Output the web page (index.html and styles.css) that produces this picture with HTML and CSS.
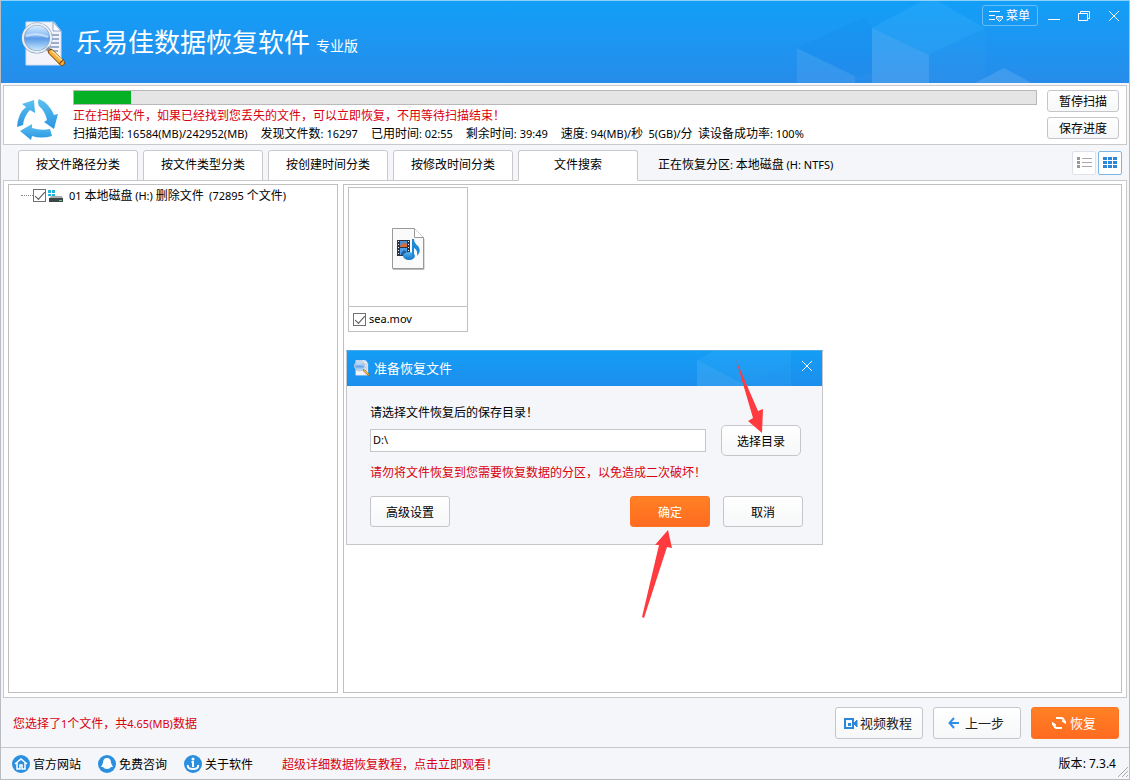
FILE: index.html
```html
<!DOCTYPE html>
<html lang="zh-CN">
<head>
<meta charset="utf-8">
<title>乐易佳数据恢复软件</title>
<link rel="stylesheet" href="styles.css">
</head>
<body>
<svg class="defs" width="0" height="0" aria-hidden="true">
  <defs>
    <linearGradient id="lens" x1="0" y1="0" x2="0" y2="1"><stop offset="0" stop-color="#e4f3ff"/><stop offset=".4" stop-color="#8ebff5"/><stop offset=".52" stop-color="#5b9be8"/><stop offset="1" stop-color="#d5f2ff"/></linearGradient>
    <linearGradient id="arrow" x1="0" y1="0" x2="0" y2="1"><stop offset="0" stop-color="#5cc0f0"/><stop offset="1" stop-color="#2a96e2"/></linearGradient>
    <linearGradient id="note" x1="0" y1="0" x2="0" y2="1"><stop offset="0" stop-color="#54b8f2"/><stop offset="1" stop-color="#1370c4"/></linearGradient>
    <symbol id="logo" viewBox="0 0 46 46">
      <path d="M5 1h28l7 9v34H5z" fill="#f3f4fb" stroke="#d3dcf0"/>
      <path d="M32 1v9h8z" fill="#fff" stroke="#8da9cf"/>
      <path d="M29 14h9M30 18h8M30 22h8M29 26h9M28 30h9" stroke="#7d95bd" stroke-width="1.3"/>
      <circle cx="16" cy="17" r="14" fill="url(#lens)" stroke="#8a9cb5" stroke-width="3"/>
      <circle cx="16" cy="17" r="14" fill="none" stroke="#e8eef6" stroke-width="2"/>
      <path d="M5 15q11-4 22 1" fill="none" stroke="#fff" stroke-opacity=".5" stroke-width="2"/>
      <path d="M26 27l4 4" stroke="#8391a5" stroke-width="4"/>
      <path d="M30 31l11 11" stroke="#8c4d0a" stroke-width="6" stroke-linecap="round"/>
      <path d="M30 31l11 11" stroke="#f5b03a" stroke-width="4" stroke-linecap="round"/>
      <path d="M31 30l11 10" stroke="#ffe39b" stroke-width="1.5" stroke-linecap="round"/>
      <path d="M38 43l5-5" stroke="#8c4d0a" stroke-width="1.2"/>
    </symbol>
  </defs>
</svg>

<div class="window">
  <header class="header">
    <svg class="cubes" width="250" height="82" viewBox="0 0 250 82" aria-hidden="true">
      <path d="M17 47L85 16l7 11v44l-17 5z" fill="#0f7fe8" fill-opacity=".14"/>
      <path d="M17 47l58 28v7H17z" fill="#fff" fill-opacity=".08"/>
      <path d="M92 27l50-27h16l47 27-56 27z" fill="#4cc0ff" fill-opacity=".2"/>
      <path d="M92 27l57 27v28H92z" fill="#fff" fill-opacity=".12"/>
      <path d="M149 54l56-27v55h-56z" fill="#fff" fill-opacity=".02"/>
      <path d="M195 82l29-15 28 15z" fill="#fff" fill-opacity=".12"/>
    </svg>
    <svg class="logo" width="46" height="46" aria-hidden="true"><use href="#logo"/></svg>
    <h1 class="title">乐易佳数据恢复软件</h1>
    <span class="edition">专业版</span>
    <div class="window-tools">
      <button class="menu-button" type="button">
        <svg width="16" height="14" viewBox="0 0 16 14" fill="none" stroke="#fff"><path d="M1 2.500h11M1 6.500h6M1 10.500h6"/><path d="M8.500 7.500h6v2l-3 3-3-3z" fill="#4fb4fa"/></svg>
        菜单
      </button>
      <button class="window-button" type="button" aria-label="最小化"><svg width="14" height="14" viewBox="0 0 14 14" stroke="#fff"><path d="M1 10.500h12"/></svg></button>
      <button class="window-button" type="button" aria-label="还原"><svg width="14" height="14" viewBox="0 0 14 14" fill="none" stroke="#fff"><path d="M1.500 4.500h9v7h-9zM3.500 4V2.500h9v7H11"/></svg></button>
      <button class="window-button" type="button" aria-label="关闭"><svg width="14" height="14" viewBox="0 0 14 14" stroke="#fff"><path d="M2 2l10 10M12 2L2 12"/></svg></button>
    </div>
  </header>

  <section class="scan">
    <svg class="scan-icon" width="46" height="44" viewBox="0 0 46 44" fill="url(#arrow)" aria-hidden="true">
      <path d="M18 2L6 6l4 3Q2 15 1 29l6-2Q8 18 14 12l5 3z"/>
      <path d="M23 1q-2 3 0 7 6 5 8 14l-3 2 10 7 4-15-4 1Q33 5 23 1z"/>
      <path d="M4 33l12-7v4q9 3 18 1l2 7q-11 3-20 0l-1 4z"/>
    </svg>
    <div class="scan-info">
      <progress class="scan-progress" value="57" max="964" aria-label="扫描进度"></progress>
      <p class="scan-line alert">正在扫描文件，如果已经找到您丢失的文件，可以立即恢复，不用等待扫描结束！</p>
      <p class="scan-line stats">
        <span>扫描范围<b>: 16584(MB)/242952(MB)</b></span>
        <span>发现文件数<b>: 16297</b></span>
        <span>已用时间<b>: 02:55</b></span>
        <span>剩余时间<b>: 39:49</b></span>
        <span>速度<b>: 94(MB)/</b>秒&nbsp; <b>5(GB)/</b>分&nbsp; 读设备成功率<b>: 100%</b></span>
      </p>
    </div>
    <div class="scan-buttons">
      <button class="button small" type="button">暂停扫描</button>
      <button class="button small" type="button">保存进度</button>
    </div>
  </section>

  <nav class="tabs">
    <button class="tab" type="button">按文件路径分类</button>
    <button class="tab" type="button">按文件类型分类</button>
    <button class="tab" type="button">按创建时间分类</button>
    <button class="tab" type="button">按修改时间分类</button>
    <button class="tab active" type="button">文件搜索</button>
    <span class="partition">正在恢复分区<b>: </b>本地磁盘 <b>(H: NTFS)</b></span>
    <div class="views">
      <button class="view" type="button" aria-label="列表"><svg width="16" height="14" viewBox="0 0 16 14"><path d="M1 1h3v3H1zM1 5h3v3H1zM1 9h3v3H1z" fill="#999"/><path d="M6 2.500h10M6 6.500h10M6 10.500h10" stroke="#a8a8a8"/></svg></button>
      <button class="view on" type="button" aria-label="缩略图"><svg width="16" height="14" viewBox="0 0 16 14" fill="#2e86d8"><path d="M1 1h4v3H1zM6 1h4v3H6zM11 1h4v3h-4zM1 5h4v3H1zM6 5h4v3H6zM11 5h4v3h-4zM1 9h4v3H1zM6 9h4v3H6zM11 9h4v3h-4z"/></svg></button>
    </div>
  </nav>

  <main class="workspace">
    <div class="tree">
      <label class="tree-item">
        <span class="branch"></span>
        <input class="check" type="checkbox" checked>
        <svg class="drive" width="16" height="14" viewBox="0 0 16 14" aria-hidden="true"><path d="M0 1h3v3H0zM4 1h3v3H4zM0 5h3v2H0zM4 5h3v2H4z" fill="#22b4dd"/><path d="M3 7h11l1 3H1z" fill="#a9b0b2"/><path d="M1 9h14v4H1z" fill="#3c464a"/><path d="M11 11h3v1h-3z" fill="#3fdf6a"/></svg>
        <span><b>01 </b>本地磁盘 <b>(H:) </b>删除文件&nbsp; <b>(72895 </b>个文件<b>)</b></span>
      </label>
    </div>
    <div class="files">
      <label class="file">
        <span class="thumb">
          <svg width="34" height="44" viewBox="0 0 34 44" aria-hidden="true">
            <path d="M2 42.500h31V12" fill="none" stroke="#bbb"/>
            <path d="M1.500 1.500h22l9 9v31h-31z" fill="#fafafa" stroke="#999"/>
            <path d="M23.500 1.500v9h9" fill="#fff" stroke="#999"/>
            <path d="M6 13h13v16H6z" fill="#2b3440"/>
            <path d="M9 14h7v6H9z" fill="#4f8fd0"/><path d="M9 21h7v7H9z" fill="#4fa0ea"/>
            <path d="M9 19l3-3 4 1v3H9z" fill="#d8693c"/><path d="M10 26l3-3 3 2v3h-6z" fill="#285b9c"/>
            <path d="M7.500 14v14M17.500 14v14" stroke="#eee" stroke-dasharray="1 2"/>
            <ellipse cx="18" cy="29" rx="6" ry="4" fill="url(#note)"/>
            <path d="M21 12h2q0 4 4 7 4 5-1 10 1-6-3-8v9h-2z" fill="#2188d8"/>
          </svg>
        </span>
        <span class="file-name"><input class="check" type="checkbox" checked><b>sea.mov</b></span>
      </label>

      <section class="dialog" role="dialog" aria-labelledby="dialog-title">
        <div class="dialog-head">
          <svg class="dialog-cubes" width="130" height="35" viewBox="0 0 130 35" aria-hidden="true"><path d="M5 9L22 0h77v35H5z" fill="#4cc0ff" fill-opacity=".16"/><path d="M5 9l50 26H5z" fill="#fff" fill-opacity=".06"/><path d="M52 35l47-22v22z" fill="#1a85e8" fill-opacity=".1"/></svg>
          <svg width="16" height="16" aria-hidden="true"><use href="#logo"/></svg>
          <h2 class="dialog-title" id="dialog-title">准备恢复文件</h2>
          <button class="window-button" type="button" aria-label="关闭"><svg width="14" height="14" viewBox="0 0 14 14" stroke="#fff"><path d="M2 2l10 10M12 2L2 12"/></svg></button>
        </div>
        <div class="dialog-body">
          <label class="dialog-text" for="folder">请选择文件恢复后的保存目录！</label>
          <div class="folder-row">
            <input class="folder" id="folder" type="text" value="D:\">
            <button class="button large" type="button">选择目录</button>
          </div>
          <p class="dialog-text alert">请勿将文件恢复到您需要恢复数据的分区，以免造成二次破坏！</p>
          <div class="dialog-actions">
            <button class="button large" type="button">高级设置</button>
            <button class="button large primary" type="button">确定</button>
            <button class="button large" type="button">取消</button>
          </div>
        </div>
        <svg class="pointers" width="476" height="270" viewBox="0 0 476 270" fill="#ff3b3f" aria-hidden="true">
          <path d="M389 9L411 60l5-2-1 24-14-12 5-3z"/>
          <path d="M321 179l4 18-5-1L297 267l-2-1L312 194l-4 0z"/>
        </svg>
      </section>
    </div>
  </main>

  <section class="actions">
    <p class="selection alert">您选择了<b>1</b>个文件，共<b>4.65(MB)</b>数据</p>
    <button class="button action" type="button"><svg width="14" height="14" viewBox="0 0 14 14" fill="none" stroke="#2e86d8" stroke-width="2"><path d="M1 3h8v9H1z"/><path d="M4 7h3v3H4z" fill="#2e86d8" stroke="none"/><path d="M10 7l3-3v7l-3-3" fill="#2e86d8" stroke-width="1"/></svg>视频教程</button>
    <button class="button action back" type="button"><svg width="12" height="12" viewBox="0 0 12 12" fill="none" stroke="#2e8fe8" stroke-width="2"><path d="M11 6H2M6 1L1.500 6 6 11"/></svg>上一步</button>
    <button class="button action primary" type="button"><svg width="14" height="14" viewBox="0 0 14 14" fill="none" stroke="#fff" stroke-width="2"><path d="M4 2h5q3 0 3 4M10 12H5q-3 0-3-4"/><path d="M10 5h3.500v2.500zM.5 9V6.500L4 9z" fill="#fff" stroke-width="1"/></svg>恢复</button>
  </section>

  <footer class="footer">
    <a class="link" href="#"><svg width="18" height="18" viewBox="0 0 18 18"><circle cx="9" cy="9" r="9" fill="#2b8fe0"/><path d="M3 9l6-5 6 5M5 8v6h3v-4h2v4h3V8" fill="none" stroke="#fff" stroke-width="1.500"/></svg>官方网站</a>
    <a class="link" href="#"><svg width="18" height="18" viewBox="0 0 18 18"><circle cx="9" cy="9" r="9" fill="#2b8fe0"/><path d="M9 3q4 0 4 5l2 4h-2q-1 2-4 2t-4-2H3l2-4q0-5 4-5z" fill="#fff"/></svg>免费咨询</a>
    <a class="link" href="#"><svg width="18" height="18" viewBox="0 0 18 18"><circle cx="9" cy="9" r="9" fill="#2b8fe0"/><path d="M7.500 7H9v5M4 10q-1 4 5 4t5-4" fill="none" stroke="#fff" stroke-width="2"/><circle cx="9" cy="4" r="1.500" fill="#fff"/></svg>关于软件</a>
    <a class="guide alert" href="#">超级详细数据恢复教程，点击立即观看！</a>
    <span class="version">版本<b>: 7.3.4</b></span>
    <svg class="grip" width="12" height="12" viewBox="0 0 12 12" stroke="#aaa" aria-hidden="true"><path d="M1 11L11 1M5 11l6-6M9 11l2-2"/></svg>
  </footer>
</div>
</body>
</html>
```

FILE: styles.css
```css
* { box-sizing: border-box; }
body, h1, h2, p { margin: 0; }
body {
  font: 12px/18px "Noto Sans CJK SC", sans-serif;
  color: #000;
  background: #f4f6f9;
}
button, input { font: inherit; color: inherit; }
button { padding: 0; white-space: nowrap; }
b { font: 11px/18px "Noto Sans", sans-serif; white-space: pre; }
svg { flex: none; display: block; }
.defs { position: absolute; }
.alert { color: #d9000f; }

.window {
  display: flex;
  flex-direction: column;
  min-height: 100vh;
  border: 1px solid #b9bdc2;
  border-top-color: #8ed0f8;
}

.header {
  position: relative;
  display: flex;
  align-items: center;
  height: 82px;
  padding-left: 20px;
  color: #fff;
  background: linear-gradient(#129ff8, #278cea);
}
.cubes { position: absolute; top: 0; right: 99px; }
.logo { margin-top: 3px; }
.title { margin: 0 0 3px 9px; font-size: 26px; line-height: 40px; font-weight: 400; }
.edition { margin: 6px 0 0 6px; font-size: 14px; line-height: 20px; }
.window-tools {
  position: relative;
  display: flex;
  align-self: flex-start;
  align-items: center;
  gap: 16px;
  margin: 4px 8px 0 auto;
}
.menu-button {
  display: flex;
  align-items: center;
  justify-content: center;
  gap: 2px;
  width: 56px;
  height: 21px;
  margin-right: -7px;
  padding: 0 2px 2px 0;
  color: #fff;
  background: none;
  border: 1px solid #67bdf9;
  border-radius: 3px;
}
.menu-button svg { margin-top: 2px; }
.window-button { width: 14px; height: 14px; border: 0; padding: 0; background: none; }

.scan {
  display: flex;
  min-height: 60px;
  margin: 2px 2px 0;
  padding: 4px 7px 0 12px;
  background: #fff;
  border: 1px solid #c9c9cb;
}
.scan-icon { margin-top: 8px; }
.scan-info { flex: 1; margin: 0 10px 0 11px; }
.scan-progress {
  display: block;
  width: 100%;
  height: 15px;
  appearance: none;
  border: 1px solid #b9b9b9;
  background: #e5e5e5;
}
.scan-progress::-webkit-progress-bar { background: #e5e5e5; }
.scan-progress::-webkit-progress-value { background: #06b025; }
.scan-line { line-height: 18px; white-space: nowrap; }
.scan-line.alert { margin-top: 1px; }
.stats { display: flex; gap: 13px; }
.scan-buttons { display: flex; flex-direction: column; gap: 5px; }

.button {
  border: 1px solid #c4c6c9;
  border-radius: 3px;
  background: linear-gradient(#fff, #f6f7f8);
}
.small { width: 72px; height: 22px; }
.large { width: 80px; height: 31px; }
.action {
  display: flex;
  align-items: center;
  justify-content: center;
  gap: 2px;
  width: 88px;
  height: 32px;
  padding-right: 2px;
  font-size: 13px;
  color: #222;
}
.back { gap: 5px; }
.primary {
  color: #fff;
  border-color: #ff7424;
  background: linear-gradient(#ff8124, #ff6b21);
}
.action.primary { gap: 4px; }

.tabs {
  display: flex;
  align-items: flex-end;
  gap: 5px;
  height: 36px;
  padding: 0 7px 0 17px;
}
.tab {
  width: 120px;
  height: 31px;
  padding-bottom: 3px;
  background: #fff;
  border: 1px solid #c9c9cb;
  border-radius: 3px 3px 0 0;
}
.tab.active { position: relative; z-index: 1; border-bottom-color: #fff; }
.partition { margin: 0 0 7px 15px; }
.views { display: flex; gap: 2px; margin: 0 0 6px auto; }
.view {
  display: grid;
  place-items: center;
  width: 24px;
  height: 24px;
  background: #fff;
  border: 1px solid #dde2e8;
  border-radius: 2px;
}
.view.on { border-color: #7bb5e4; }

.workspace {
  display: flex;
  flex: 1;
  gap: 5px;
  margin: -1px 2px 0;
  padding: 3px 4px 4px;
  background: #fff;
  border: 1px solid #c9c9cb;
}
.tree { width: 330px; flex: none; padding: 1px 12px; border: 1px solid #c0c0c0; }
.tree-item { display: flex; align-items: center; white-space: nowrap; }
.branch { width: 12px; border-top: 1px dotted #888; }
.check {
  flex: none;
  width: 13px;
  height: 13px;
  margin: 0;
  appearance: none;
  border: 1px solid #707070;
  background: #fff;
  display: grid;
  place-items: center;
}
.check:checked::after {
  content: "";
  width: 9px;
  height: 4px;
  border: solid #555;
  border-width: 0 0 1px 1px;
  transform: translateY(-1px) rotate(-48deg);
}
.drive { margin: 0 5px 0 2px; }
.files { position: relative; flex: 1; padding: 2px 4px; border: 1px solid #c0c0c0; }
.file { display: block; width: 120px; border: 1px solid #c0c0c0; }
.thumb {
  display: grid;
  place-items: center;
  height: 119px;
  padding-top: 4px;
  border-bottom: 1px solid #c0c0c0;
}
.file-name { display: flex; align-items: center; gap: 3px; height: 24px; padding-left: 4px; }

.dialog {
  position: absolute;
  top: 165px;
  left: 2px;
  width: 477px;
  background: #f5f6f9;
  border: 1px solid #c4c6c9;
  border-top-color: #4fa8e8;
}
.dialog-head {
  position: relative;
  display: flex;
  align-items: center;
  gap: 4px;
  height: 35px;
  padding: 0 8px 2px 7px;
  color: #fff;
  background: linear-gradient(#149df6, #1c8eec);
}
.dialog-head .window-button { position: relative; margin: -3px 0 0 auto; }
.dialog-cubes { position: absolute; top: 0; right: 0; }
.dialog-title { font-size: 13px; line-height: 20px; font-weight: 400; }
.dialog-body { padding: 17px 19px 17px 23px; }
.dialog-text { display: block; line-height: 18px; }
.folder-row { display: flex; align-items: center; gap: 15px; margin-top: 4px; padding-right: 2px; }
.folder-row .button { border-radius: 5px; }
.folder {
  flex: 1;
  min-width: 0;
  height: 23px;
  padding: 0 2px 2px;
  border: 1px solid #c4c6c9;
  background: #fff;
  font: 11px/18px "Noto Sans", sans-serif;
}
.dialog-text.alert { margin-top: 7px; }
.dialog-actions { display: flex; gap: 13px; margin-top: 15px; }
.dialog-actions .primary { margin-left: auto; }
.pointers { position: absolute; top: 0; left: 0; pointer-events: none; }

.actions {
  display: flex;
  align-items: center;
  gap: 10px;
  height: 49px;
  padding: 0 10px 0 12px;
}
.selection { margin-right: auto; padding-top: 2px; }
.footer {
  position: relative;
  display: flex;
  align-items: center;
  height: 32px;
  padding: 0 13px 0 11px;
  border-top: 1px solid #c9c9cb;
}
.link { display: flex; align-items: center; gap: 3px; margin-right: 17px; color: #000; text-decoration: none; }
.guide { margin-left: 12px; text-decoration: none; }
.version { margin-left: auto; }
.version b { font-size: 12px; }
.grip { position: absolute; right: 0; bottom: 1px; }
```
